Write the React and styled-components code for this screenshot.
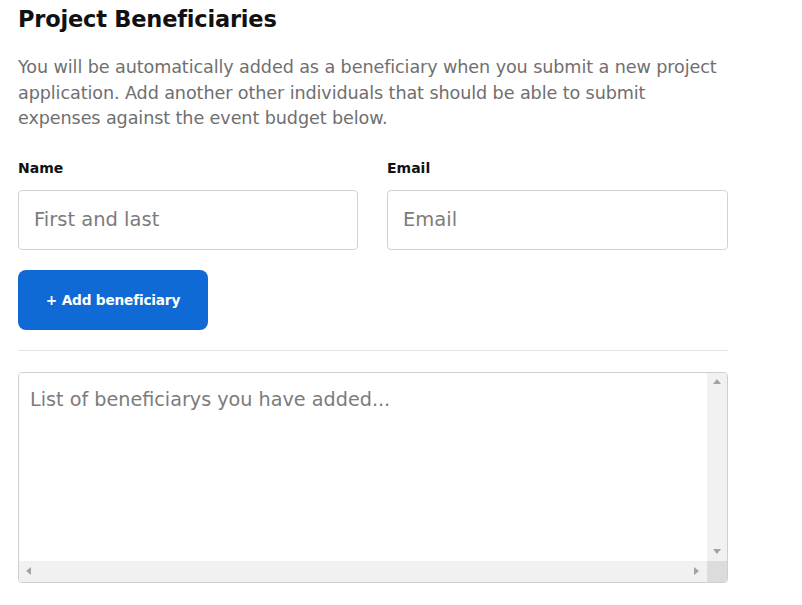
import React from "react";
import styled, { createGlobalStyle } from "styled-components";

const Global = createGlobalStyle`
  html, body { margin: 0; padding: 0; background: #fff; }
  body { font-family: "DejaVu Sans", "Noto Sans", sans-serif; }
  * { box-sizing: border-box; }
`;

const Page = styled.div`
  width: 710px;
  margin-left: 18px;
  padding-top: 4px;
  display: flex;
  flex-direction: column;
`;

const Title = styled.h2`
  margin: 0;
  font-size: 22.5px;
  line-height: 30px;
  font-weight: 700;
  color: #111;
  letter-spacing: -0.2px;
`;

const Intro = styled.p`
  margin: 21px 0 0;
  font-size: 17.6px;
  line-height: 25.5px;
  color: #6f6f6f;
  letter-spacing: -0.1px;
  white-space: nowrap;
`;

const Fields = styled.div`
  display: grid;
  grid-template-columns: 340px 341px;
  column-gap: 29px;
  margin-top: 27px;
`;

const Field = styled.div`
  display: flex;
  flex-direction: column;
`;

const Label = styled.label`
  font-size: 14px;
  line-height: 18px;
  font-weight: 700;
  color: #111;
  margin-bottom: 13px;
`;

const Input = styled.input`
  height: 60px;
  width: 100%;
  border: 1px solid #d2d2d2;
  border-radius: 4px;
  padding: 0 15px;
  font-family: inherit;
  font-size: 19.5px;
  color: #333;
  outline: none;
  &::placeholder { color: #7c7c7c; }
`;

const AddButton = styled.button`
  margin-top: 20px;
  width: 190px;
  height: 60px;
  border: 0;
  border-radius: 8px;
  background: #0f6ad6;
  color: #fff;
  font-family: inherit;
  font-size: 13.7px;
  font-weight: 700;
  letter-spacing: -0.2px;
  cursor: pointer;
`;

const Divider = styled.hr`
  margin: 20px 0 0;
  border: 0;
  border-top: 1px solid #e4e4e4;
  width: 100%;
`;

const ListBox = styled.div`
  margin-top: 21px;
  height: 211px;
  width: 710px;
  border: 1px solid #cfcfcf;
  border-radius: 4px;
  overflow: hidden;
  display: grid;
  grid-template-columns: 1fr 20px;
  grid-template-rows: 1fr 21px;
`;

const ListArea = styled.textarea`
  border: 0;
  resize: none;
  outline: none;
  padding: 13px 11px;
  font-family: inherit;
  font-size: 19.2px;
  line-height: 28px;
  color: #333;
  overflow: hidden;
  &::placeholder { color: #7c7c7c; }
`;

const Track = styled.div`
  background: #f1f1f1;
  display: flex;
  flex-direction: ${p => (p.$vertical ? "column" : "row")};
  justify-content: space-between;
  align-items: center;
  padding: ${p => (p.$vertical ? "6px 0 7px" : "0 8px 0 7px")};
`;

const Corner = styled.div`
  background: #dcdcdc;
`;

const Arrow = ({ dir }) => {
  const pts = {
    up: "0,5 4,0 8,5",
    down: "0,0 8,0 4,5",
    left: "5,0 5,8 0,4",
    right: "0,0 0,8 5,4",
  }[dir];
  const vertical = dir === "up" || dir === "down";
  return (
    <svg width={vertical ? 8 : 5} height={vertical ? 5 : 8} viewBox={vertical ? "0 0 8 5" : "0 0 5 8"}>
      <polygon points={pts} fill="#a3a3a3" />
    </svg>
  );
};

export default function App() {
  return (
    <>
      <Global />
      <Page>
        <Title>Project Beneficiaries</Title>
        <Intro>
          You will be automatically added as a beneficiary when you submit a new project
          <br />
          application. Add another other individuals that should be able to submit
          <br />
          expenses against the event budget below.
        </Intro>
        <Fields>
          <Field>
            <Label>Name</Label>
            <Input placeholder="First and last" />
          </Field>
          <Field>
            <Label>Email</Label>
            <Input placeholder="Email" />
          </Field>
        </Fields>
        <AddButton>+ Add beneficiary</AddButton>
        <Divider />
        <ListBox>
          <ListArea placeholder="List of beneficiarys you have added..." />
          <Track $vertical>
            <Arrow dir="up" />
            <Arrow dir="down" />
          </Track>
          <Track>
            <Arrow dir="left" />
            <Arrow dir="right" />
          </Track>
          <Corner />
        </ListBox>
      </Page>
    </>
  );
}
